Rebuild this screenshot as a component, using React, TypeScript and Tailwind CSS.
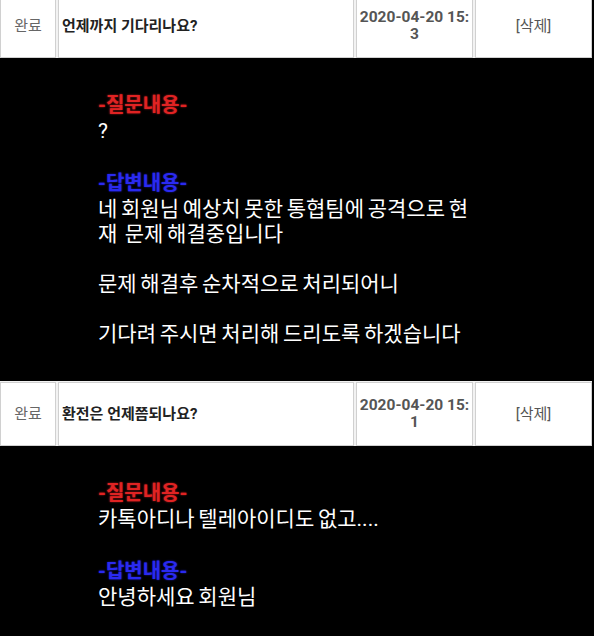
import React from "react";

const font = "font-['Roboto','Noto_Sans_CJK_KR',sans-serif]";

function Row({ title, time }: { title: string; time: string }) {
  const cell = "h-[64px] border border-[#d0d0d0] bg-white flex items-center";
  return (
    <div className="w-[592px] bg-[#f2f2f2] pt-[1px] flex gap-[2px] shrink-0">
      <div className={`${cell} w-[56px] justify-center text-[15px] text-[#666]`}>완료</div>
      <div className={`${cell} w-[296px] pl-[3px] text-[15px] font-bold text-[#222]`}>{title}</div>
      <div className={`${cell} w-[117px] justify-center text-center text-[15.5px] leading-[17px] font-bold text-[#555]`}>
        <span>
          2020-04-20 15:
          <br />
          {time}
        </span>
      </div>
      <div className={`${cell} w-[117px] justify-center text-[15px] text-[#555]`}>[삭제]</div>
    </div>
  );
}

function Q() {
  return (
    <div className="h-[28px] leading-[28px] text-[20px] font-bold text-[#e02323] [text-shadow:0_0_2px_rgba(255,40,40,0.7)]">
      -질문내용-
    </div>
  );
}

function A() {
  return (
    <div className="h-[28px] leading-[28px] text-[20px] font-bold text-[#2a2af0] [text-shadow:0_0_2px_rgba(40,40,255,0.7)]">
      -답변내용-
    </div>
  );
}

function L({ children }: { children?: React.ReactNode }) {
  return (
    <div className="h-[25px] leading-[25px] text-[21px] text-white whitespace-pre [word-spacing:-1.5px]">
      {children}
    </div>
  );
}

export default function App() {
  return (
    <div className={`${font} w-[594px] h-[636px] overflow-hidden bg-black flex flex-col`}>
      <div className="-mt-[7px]">
        <Row title="언제까지 기다리나요?" time="3" />
      </div>
      <div className="pl-[98px] pt-[33px] pb-[34px]">
        <Q />
        <L>?</L>
        <L />
        <A />
        <L>네 회원님 예상치 못한 통협팀에 공격으로 현</L>
        <L>재  문제 해결중입니다</L>
        <L />
        <L>문제 해결후 순차적으로 처리되어니</L>
        <L />
        <L>기다려 주시면 처리해 드리도록 하겠습니다</L>
      </div>
      <Row title="환전은 언제쯤되나요?" time="1" />
      <div className="pl-[98px] pt-[33px]">
        <Q />
        <L>카톡아디나 텔레아이디도 없고....</L>
        <L />
        <A />
        <L>안녕하세요 회원님</L>
        <L />
        <L>&nbsp;</L>
      </div>
    </div>
  );
}
